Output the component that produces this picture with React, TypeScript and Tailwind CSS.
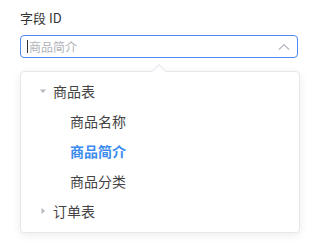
import { useState } from "react";

type Node = { label: string; children?: string[]; open?: boolean };

const tree: Node[] = [
  { label: "商品表", open: true, children: ["商品名称", "商品简介", "商品分类"] },
  { label: "订单表", open: false, children: [] },
];

function Caret({ open }: { open?: boolean }) {
  return (
    <svg
      width="8"
      height="8"
      viewBox="0 0 8 8"
      className={open ? "" : "-rotate-90"}
    >
      <path d="M1 2.5 L7 2.5 L4 6 Z" fill="#b4b7bd" />
    </svg>
  );
}

export default function App() {
  const [selected, setSelected] = useState("商品简介");

  return (
    <div
      className="w-[313px] h-[243px] bg-white pl-5 pt-[9px]"
      style={{ fontFamily: '"Noto Sans CJK SC", "Liberation Sans", sans-serif' }}
    >
      <div className="text-[13px] leading-[18px] text-[#333]">字段 ID</div>
      <div className="mt-2 w-[278px] h-[23px] border border-[#4d8af7] rounded-[4px] flex items-center px-[6px] justify-between">
        <span className="flex items-center text-[12px] text-[#b0b3b8]">
          <span className="w-px h-[13px] bg-[#333] mr-[1px]" />
          {selected}
        </span>
        <svg width="12" height="8" viewBox="0 0 12 8" className="mr-[1px]">
          <path d="M1 6.5 L6 1.5 L11 6.5" stroke="#b4b7bd" strokeWidth="1.2" fill="none" />
        </svg>
      </div>

      <div className="relative mt-[13px] w-[280px] bg-white border border-[#e6e8ee] rounded-[4px] shadow-[0_2px_10px_rgba(0,0,0,0.08)] pt-[4px] pb-[6px]">
        <div className="absolute -top-[6px] left-[133px] w-[10px] h-[10px] bg-white border-l border-t border-[#e6e8ee] rotate-45" />
        {tree.map((n) => (
          <div key={n.label}>
            <div className="h-[30px] flex items-center pl-[18px] text-[14px] text-[#444]">
              <span className="w-[8px] flex items-center">
                <Caret open={n.open} />
              </span>
              <span className="ml-[6px]">{n.label}</span>
            </div>
            {n.open &&
              n.children?.map((c) => (
                <div
                  key={c}
                  onClick={() => setSelected(c)}
                  className={
                    "h-[30px] flex items-center pl-[49px] text-[14px] cursor-pointer " +
                    (c === selected ? "text-[#3c8cf0] font-bold" : "text-[#444]")
                  }
                >
                  {c}
                </div>
              ))}
          </div>
        ))}
      </div>
    </div>
  );
}
